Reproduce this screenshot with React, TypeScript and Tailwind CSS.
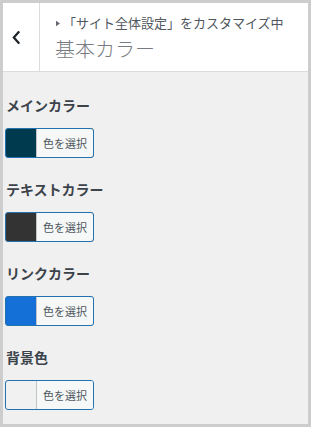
import React from 'react';

type ColorItem = {
  label: string;
  color: string;
};

const colors: ColorItem[] = [
  { label: 'メインカラー', color: '#003a4f' },
  { label: 'テキストカラー', color: '#333333' },
  { label: 'リンクカラー', color: '#1470d6' },
  { label: '背景色', color: '#f1f1f1' },
];

const font = { fontFamily: '"Noto Sans CJK JP", "Noto Sans", sans-serif' };

function ColorButton({ color }: { color: string }) {
  return (
    <button
      type="button"
      className="flex h-[30px] w-[89px] overflow-hidden rounded-[3px] border border-[#2271b1] p-0"
      style={{ backgroundColor: color }}
    >
      <span className="ml-[30px] flex h-full flex-1 items-center justify-center border-l border-[#c3c4c7] bg-[#f6f7f7] text-[11px] leading-none text-[#50575e]">
        色を選択
      </span>
    </button>
  );
}

export default function App() {
  return (
    <div className="h-[427px] w-[311px] bg-[#cdcdcd] p-[3px]" style={font}>
      <div className="flex h-full flex-col bg-[#f0f0f1]">
        <div className="flex h-[69px] shrink-0 border-b border-[#dcdcde] bg-white">
          <button type="button" className="flex w-[37px] items-center border-r border-[#dcdcde] pl-[9px]">
            <svg width="8" height="13" viewBox="0 0 8 13" fill="none">
              <path d="M6.5 1.2 L1.8 6.5 L6.5 11.8" stroke="#1d2327" strokeWidth="2.2" strokeLinecap="square" />
            </svg>
          </button>
          <div className="flex flex-col pl-[15px] pt-[11px]">
            <div className="flex items-center text-[13px] leading-[18px] text-[#50575e]">
              <svg width="6" height="7" viewBox="0 0 6 7" className="mr-[2px]">
                <path d="M1 0.8 L5 3.5 L1 6.2 Z" fill="#646970" />
              </svg>
              <span>「サイト全体設定」をカスタマイズ中</span>
            </div>
            <div className="mt-[4px] text-[20px] font-extralight leading-[26px] text-[#787c82]">基本カラー</div>
          </div>
        </div>
        <div className="flex flex-col pl-[2px] pt-[23px]">
          {colors.map(item => (
            <div key={item.label} className="mb-[21px] flex flex-col">
              <div className="mb-[13px] pl-[1px] text-[14px] font-bold leading-[20px] text-[#3c434a]">{item.label}</div>
              <ColorButton color={item.color} />
            </div>
          ))}
        </div>
      </div>
    </div>
  );
}
